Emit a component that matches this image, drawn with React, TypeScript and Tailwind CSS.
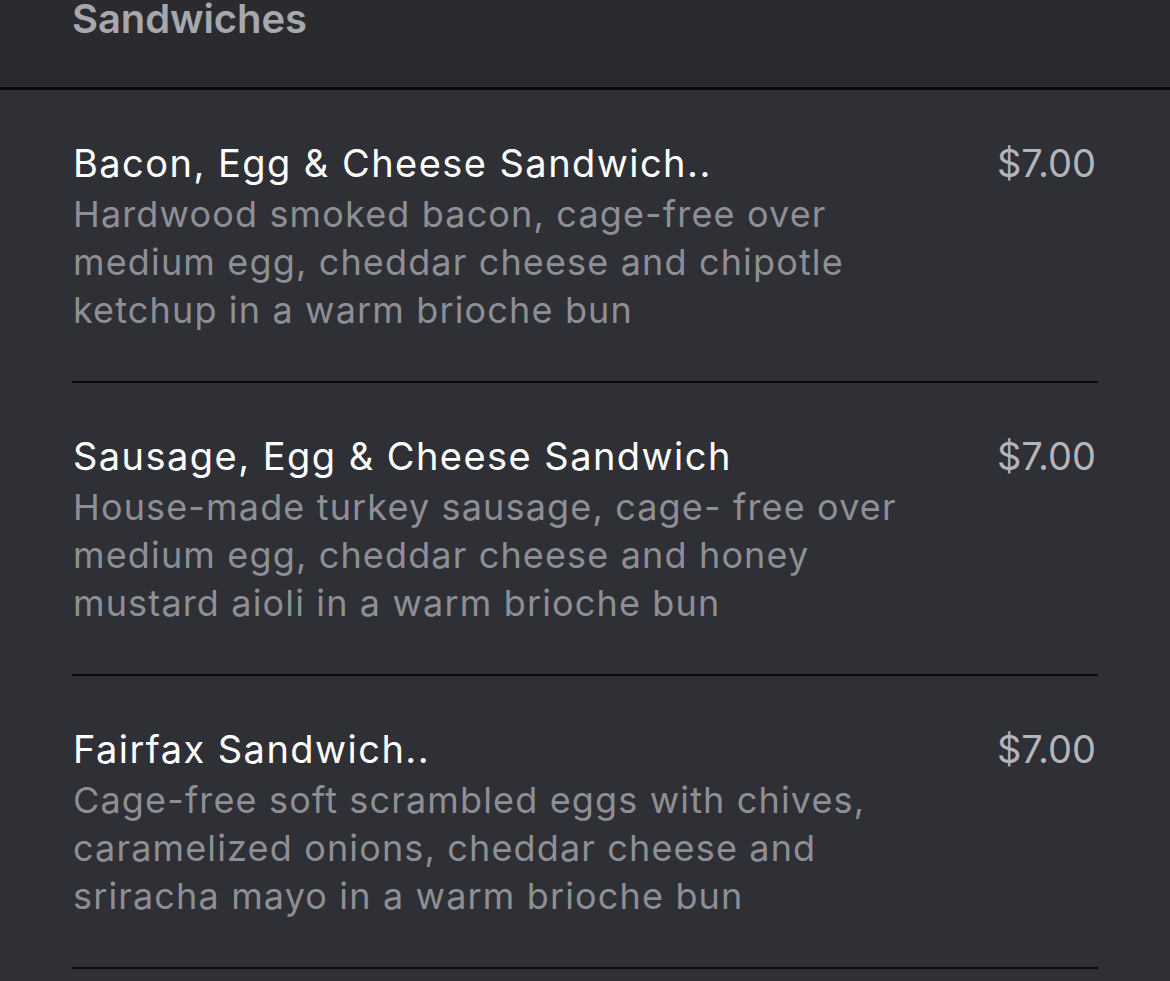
import React from "react";

const items = [
  {
    title: "Bacon, Egg & Cheese Sandwich..",
    desc: ["Hardwood smoked bacon, cage-free over", "medium egg, cheddar cheese and chipotle", "ketchup in a warm brioche bun"],
    price: "$7.00",
  },
  {
    title: "Sausage, Egg & Cheese Sandwich",
    desc: ["House-made turkey sausage, cage- free over", "medium egg, cheddar cheese and honey", "mustard aioli in a warm brioche bun"],
    price: "$7.00",
  },
  {
    title: "Fairfax Sandwich..",
    desc: ["Cage-free soft scrambled eggs with chives,", "caramelized onions, cheddar cheese and", "sriracha mayo in a warm brioche bun"],
    price: "$7.00",
  },
];

export default function App() {
  return (
    <div
      className="w-[1170px] h-[981px] overflow-hidden bg-[#2f3035]"
      style={{ fontFamily: "Inter, 'Noto Sans', sans-serif" }}
    >
      <div className="h-[87px] bg-[#2b2b2f] pl-[72px] overflow-hidden">
        <div className="text-[40px] leading-[38px] font-semibold text-[#a6a8ad] tracking-[-0.1px]">Sandwiches</div>
      </div>
      <div className="h-[3px] bg-[#0a0b0f]" />
      <div className="px-[72px]">
        {items.map((it) => (
          <div key={it.title} className="pt-[49px] pb-[47px] border-b-[2px] border-[#090a0e]">
            <div className="flex justify-between items-start">
              <div className="pl-[1px]">
                <div className="text-[38px] leading-[48px] text-white tracking-[1.45px]">{it.title}</div>
                <div className="mt-[3px] text-[36px] leading-[48px] text-[#8e8f95] tracking-[1.15px]">
                  {it.desc.map((d) => (
                    <div key={d}>{d}</div>
                  ))}
                </div>
              </div>
              <div className="text-[38px] leading-[48px] text-[#b4b5ba] pr-[2px]">{it.price}</div>
            </div>
          </div>
        ))}
      </div>
    </div>
  );
}
